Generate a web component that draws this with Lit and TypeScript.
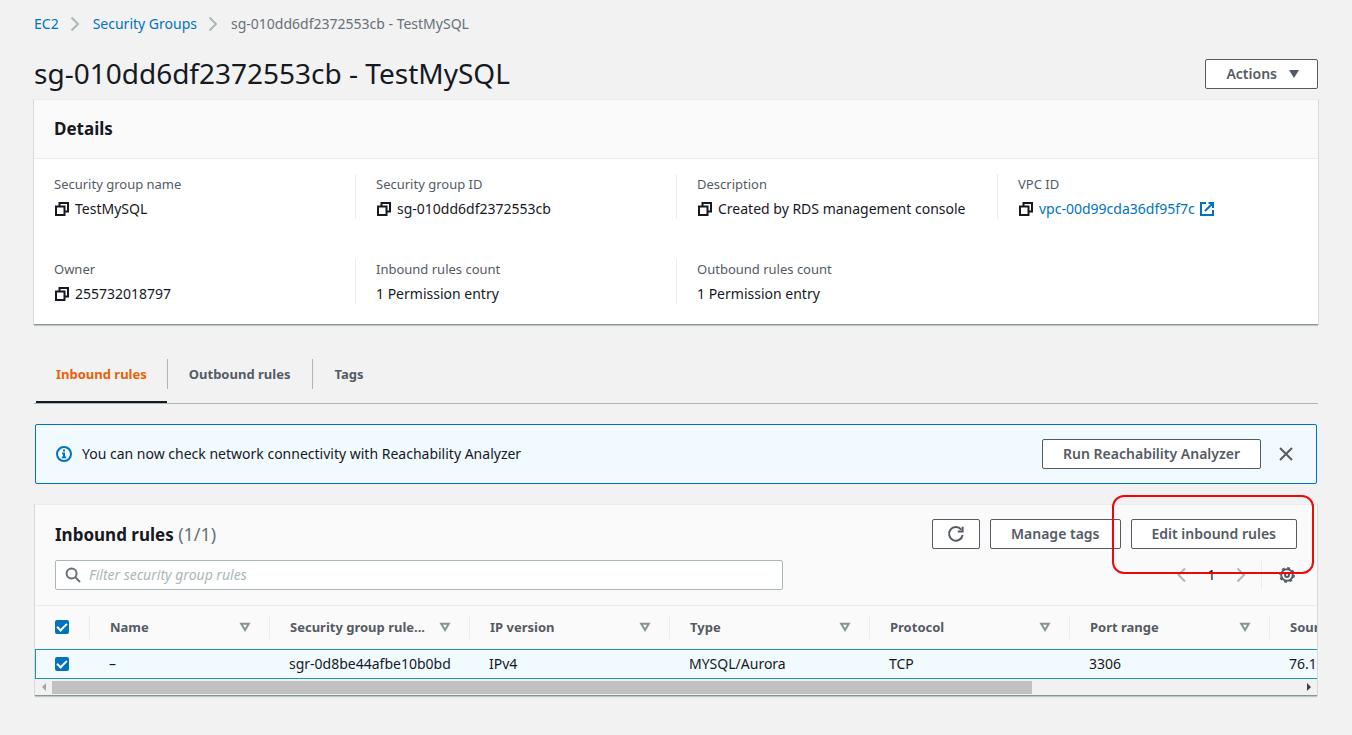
import { LitElement, html, css, svg, nothing } from "lit";
import { customElement, property } from "lit/decorators.js";

const paths: Record<string, { size: number; body: unknown }> = {
  chevron: { size: 16, body: svg`<path d="M4.5 1.5 11 8l-6.5 6.5" />` },
  chevronLeft: { size: 16, body: svg`<path d="M11 1.5 4.5 8l6.5 6.5" />` },
  copy: { size: 16, body: svg`<path d="M2 5.5h8.5V14H2z M5.5 5V2H14v8.5h-3" />` },
  external: { size: 16, body: svg`<path d="M7 2H2v12h12V9 M9.5 2H14v5 M14 2 6 10" />` },
  info: {
    size: 16,
    body: svg`<circle cx="8" cy="8" r="7" /><path class="fill" d="M7 3.6h2v2H7z M6 6.6h3v4h1.2v1.6H5.8v-1.6H7V8.2H6z" />`,
  },
  close: { size: 16, body: svg`<path d="M2 2l12 12M14 2 2 14" />` },
  refresh: { size: 16, body: svg`<path d="M14.6 9A6.8 6.8 0 1 1 13.2 3.6" /><path d="M14.6 0.8v4.8H9.8" />` },
  search: { size: 16, body: svg`<circle cx="6.6" cy="6.6" r="5" /><path d="M10.4 10.4 15 15" />` },
  caret: { size: 10, body: svg`<path class="fill" d="M0 1h10L5 9z" />` },
  sort: { size: 10, body: svg`<path d="M1.2 1.7h7.6L5 8z" />` },
  gear: {
    size: 16,
    body: svg`<circle cx="8" cy="8" r="5.8" /><circle class="teeth" cx="8" cy="8" r="7.1" /><circle cx="8" cy="8" r="2" />`,
  },
};

@customElement("ui-icon")
export class UiIcon extends LitElement {
  static styles = css`
    :host { display: inline-flex; flex: none; }
    svg { width: 100%; height: 100%; overflow: visible; }
    .glyph { fill: none; stroke: currentColor; stroke-width: 2; }
    .fill { fill: currentColor; stroke: none; }
    .teeth { stroke-dasharray: 2.8 2.78; stroke-width: 1.6; }
  `;
  @property() name = "copy";
  render() {
    const icon = paths[this.name];
    return html`<svg viewBox="0 0 ${icon.size} ${icon.size}" aria-hidden="true">
      <g class="glyph">${icon.body}</g>
    </svg>`;
  }
}

interface Detail { label: string; value: string; copy?: boolean; link?: boolean; }

const details: Detail[] = [
  { label: "Security group name", value: "TestMySQL", copy: true },
  { label: "Security group ID", value: "sg-010dd6df2372553cb", copy: true },
  { label: "Description", value: "Created by RDS management console", copy: true },
  { label: "VPC ID", value: "vpc-00d99cda36df95f7c", copy: true, link: true },
  { label: "Owner", value: "255732018797", copy: true },
  { label: "Inbound rules count", value: "1 Permission entry" },
  { label: "Outbound rules count", value: "1 Permission entry" },
];

const columns = ["Name", "Security group rule...", "IP version", "Type", "Protocol", "Port range", "Source"];
const rule = ["–", "sgr-0d8be44afbe10b0bd", "IPv4", "MYSQL/Aurora", "TCP", "3306", "76.1"];

@customElement("app-root")
export class AppRoot extends LitElement {
  static styles = css`
    :host {
      display: block;
      min-height: 100vh;
      box-sizing: border-box;
      padding: 14px 34px 38px;
      background: #f2f2f2;
      color: #16191f;
      font: 14px/20px "Noto Sans", "Open Sans", sans-serif;
    }
    * { box-sizing: border-box; }
    h1, h2, dl, dd, ol { margin: 0; padding: 0; }
    a { color: #0073bb; text-decoration: none; }
    button { font: inherit; color: inherit; cursor: pointer; }

    .crumbs { display: flex; align-items: center; list-style: none; gap: 10px; color: #687078; }
    .crumbs li { display: flex; align-items: center; gap: 8px; }
    .crumbs ui-icon { width: 16px; height: 16px; color: #aab7b8; }

    .title { display: flex; align-items: center; justify-content: space-between; margin: 22px 0 9px; }
    .title .btn { margin-top: 2px; }
    h1 { font-size: 28px; line-height: 34px; font-weight: 400; }
    .btn {
      display: inline-flex; align-items: center; justify-content: center; gap: 12px;
      height: 30px; padding: 0 20px;
      background: #fff; border: 1px solid #545b64; border-radius: 2px;
      color: #545b64; font-weight: 600; white-space: nowrap;
    }
    .btn ui-icon { width: 16px; height: 16px; }
    .btn .caret { width: 10px; height: 10px; }
    .btn.menu { padding: 0 18px 0 20px; }
    .btn.square { padding: 0 15px; }
    .plain { display: inline-flex; padding: 0; border: 0; background: none; }

    .card {
      background: #fff;
      border: solid #eaeded; border-width: 1px 0; border-bottom-color: #879596;
      box-shadow: -1px 0 #d5dbdb, 1px 0 #d5dbdb, 0 1px 1px rgba(0, 28, 36, 0.2);
    }
    .card-head { padding: 19px 20px; background: #fafafa; border-bottom: 1px solid #eaeded; }
    h2 { font-size: 17px; line-height: 20px; font-weight: 700; }
    h2 span { font-weight: 400; font-size: 18px; color: #687078; }

    .details { display: grid; grid-template-columns: repeat(4, 1fr); row-gap: 40px; padding: 15px 0 20px; }
    .detail { display: grid; gap: 5px; padding: 0 20px; border-left: 1px solid #eaeded; }
    .detail:nth-child(4n + 1) { border-left: 0; }
    .detail dt { color: #545b64; font-size: 13px; }
    .detail dd { display: flex; align-items: center; }
    .detail a { display: inline-flex; align-items: center; gap: 4px; }
    .detail ui-icon { width: 16px; height: 16px; }
    .detail .plain { margin-right: 5px; }
    .detail .plain ui-icon { color: #16191f; }

    .tabs { display: flex; margin: 25px 0 20px; padding: 0 2px; border-bottom: 1px solid #aab7b8; }
    .tab {
      padding: 14px 22px 19px; border: 0; background: none; color: #545b64;
      font-size: 13px; font-weight: 700; position: relative;
    }
    .tab + .tab::before {
      content: ""; position: absolute; left: 0; top: 9px; height: 30px; border-left: 1px solid #aab7b8;
    }
    .tab.active { color: #eb5f07; padding-left: 20px; padding-right: 20px; }
    .tab.active::after {
      content: ""; position: absolute; left: 0; right: 0; bottom: 0; height: 2px; background: #16191f;
    }

    .alert {
      display: flex; align-items: center; margin: 0 1px 20px; padding: 14px 22px 14px 20px;
      border: 1px solid #0073bb; border-radius: 2px; background: #f1faff;
    }
    .alert p { flex: 1; margin: 0 10px; }
    .alert ui-icon { width: 16px; height: 16px; color: #0073bb; }
    .alert .plain { margin-left: 17px; }
    .alert .plain ui-icon { color: #545b64; }

    .rules { margin: 0 1px; }
    .rules-head { padding: 14px 20px 15px; background: #fafafa; border-bottom: 1px solid #eaeded; }
    .row { display: flex; align-items: center; justify-content: space-between; }
    .row + .row { margin-top: 11px; }
    .actions { display: flex; gap: 10px; }
    .marked { position: relative; display: flex; }
    .mark {
      position: absolute; z-index: 1; inset: -24px -17px -25px -19px;
      border: 2px solid #f00808; border-radius: 12px; pointer-events: none;
    }
    .search {
      display: flex; align-items: center; gap: 8px; flex: 0 1 728px; height: 30px; padding: 0 9px;
      border: 1px solid #aab7b8; border-radius: 2px; background: #fff; color: #687078;
    }
    .search ui-icon { width: 16px; height: 16px; }
    .search input { flex: 1; min-width: 0; border: 0; outline: 0; padding: 0; background: none; font: inherit; color: #16191f; }
    .search input::placeholder { color: #aab7b8; font-style: italic; opacity: 1; }
    .pager { display: flex; align-items: center; color: #aab7b8; }
    .pager ui-icon { width: 16px; height: 16px; }
    .page { width: 43px; justify-content: center; color: #16191f; }
    .prefs { margin-left: 12px; padding: 7px 2px 7px 17px; border-left: 1px solid #eaeded; color: #545b64; }

    .scroller { overflow: hidden; }
    table { width: 1434px; table-layout: fixed; border-collapse: separate; border-spacing: 0; }
    .pick { width: 54px; }
    .first { width: 180px; }
    th { height: 43px; padding: 0 0 2px; text-align: left; background: #fafafa; color: #545b64; font-size: 13px; font-weight: 700; }
    .th { display: flex; align-items: center; justify-content: space-between; height: 24px; padding: 0 19px 0 20px; border-left: 1px solid #eaeded; white-space: nowrap; }
    .th ui-icon { width: 10px; height: 10px; color: #879596; }
    td { height: 30px; padding: 0 0 0 20px; background: #f1faff; border: solid #2096a8; border-width: 1px 0; white-space: nowrap; }
    td.pick { border-left-width: 1px; padding-left: 19px; }
    th.pick { padding-left: 20px; }
    .check {
      appearance: none; display: grid; place-items: center; width: 14px; height: 14px; margin: 0;
      background: #0073bb; border-radius: 2px;
    }
    .check::before {
      content: ""; width: 4px; height: 8px; margin-top: -2px;
      border: solid #fff; border-width: 0 2px 2px 0; transform: rotate(45deg);
    }

    .bar { display: flex; align-items: center; height: 16px; padding: 1px 0; background: #f1f1f1; }
    .arrow { width: 17px; height: 8px; display: flex; justify-content: center; }
    .arrow::before { content: ""; border: solid transparent; border-width: 4px; }
    .arrow.left::before { border-right-color: #a3a3a3; border-left-width: 0; }
    .arrow.right::before { border-left-color: #404040; border-right-width: 0; }
    .track { flex: 1; height: 13px; }
    .thumb { width: 78.5%; height: 100%; background: #c1c1c1; }
  `;

  private renderDetail(d: Detail) {
    return html`<div class="detail">
      <dt>${d.label}</dt>
      <dd>
        ${d.copy
          ? html`<button class="plain" aria-label="Copy ${d.label}"><ui-icon name="copy"></ui-icon></button>`
          : nothing}
        ${d.link ? html`<a href="#">${d.value}<ui-icon name="external"></ui-icon></a>` : d.value}
      </dd>
    </div>`;
  }

  render() {
    return html`
      <nav aria-label="Breadcrumbs">
        <ol class="crumbs">
          <li><a href="#">EC2</a><ui-icon name="chevron"></ui-icon></li>
          <li><a href="#">Security Groups</a><ui-icon name="chevron"></ui-icon></li>
          <li>sg-010dd6df2372553cb - TestMySQL</li>
        </ol>
      </nav>
      <header class="title">
        <h1>sg-010dd6df2372553cb - TestMySQL</h1>
        <button class="btn menu">Actions<ui-icon class="caret" name="caret"></ui-icon></button>
      </header>

      <section class="card">
        <div class="card-head"><h2>Details</h2></div>
        <dl class="details">${details.map((d) => this.renderDetail(d))}</dl>
      </section>

      <div class="tabs" role="tablist">
        <button class="tab active" role="tab" aria-selected="true">Inbound rules</button>
        <button class="tab" role="tab">Outbound rules</button>
        <button class="tab" role="tab">Tags</button>
      </div>

      <div class="alert">
        <ui-icon name="info"></ui-icon>
        <p>You can now check network connectivity with Reachability Analyzer</p>
        <button class="btn">Run Reachability Analyzer</button>
        <button class="plain" aria-label="Dismiss"><ui-icon name="close"></ui-icon></button>
      </div>

      <section class="card rules">
        <div class="rules-head">
          <div class="row">
            <h2>Inbound rules <span>(1/1)</span></h2>
            <div class="actions">
              <button class="btn square" aria-label="Refresh"><ui-icon name="refresh"></ui-icon></button>
              <button class="btn">Manage tags</button>
              <div class="marked">
                <button class="btn">Edit inbound rules</button>
                <div class="mark"></div>
              </div>
            </div>
          </div>
          <div class="row">
            <label class="search">
              <ui-icon name="search"></ui-icon>
              <input type="text" placeholder="Filter security group rules" aria-label="Filter security group rules" />
            </label>
            <div class="pager">
              <button class="plain pager" aria-label="Previous page"><ui-icon name="chevronLeft"></ui-icon></button>
              <button class="plain page">1</button>
              <button class="plain pager" aria-label="Next page"><ui-icon name="chevron"></ui-icon></button>
              <button class="plain prefs" aria-label="Preferences"><ui-icon name="gear"></ui-icon></button>
            </div>
          </div>
        </div>
        <div class="scroller">
          <table>
            <thead>
              <tr>
                <th class="pick"><input class="check" type="checkbox" checked aria-label="Select all rules" /></th>
                ${columns.map(
                  (c, i) => html`<th class=${i === 0 ? "first" : ""}>
                    <div class="th">${c}<ui-icon name="sort"></ui-icon></div>
                  </th>`
                )}
              </tr>
            </thead>
            <tbody>
              <tr>
                <td class="pick"><input class="check" type="checkbox" checked aria-label="Select rule" /></td>
                ${rule.map((v) => html`<td>${v}</td>`)}
              </tr>
            </tbody>
          </table>
        </div>
        <div class="bar" aria-hidden="true">
          <span class="arrow left"></span>
          <div class="track"><div class="thumb"></div></div>
          <span class="arrow right"></span>
        </div>
      </section>
    `;
  }
}
